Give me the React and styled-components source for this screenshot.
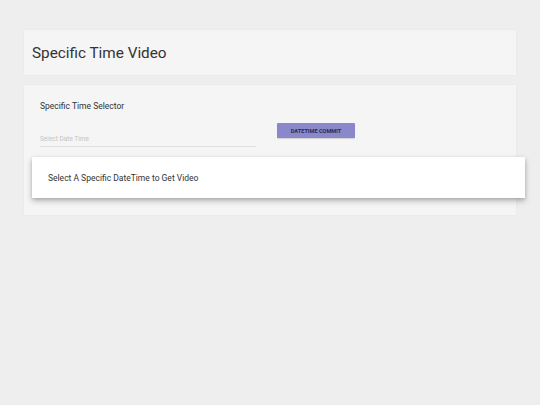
import React from "react";
import styled, { createGlobalStyle } from "styled-components";

const Global = createGlobalStyle`
  html, body { margin: 0; padding: 0; background: #eeeeee; }
  body { font-family: Roboto, "Noto Sans", sans-serif; }
  * { box-sizing: border-box; }
`;

const Page = styled.div`
  width: 540px;
  height: 405px;
  padding: 30px 24px 0 24px;
  display: flex;
  flex-direction: column;
  gap: 10px;
`;

const HeaderCard = styled.div`
  height: 45px;
  background: #f5f5f5;
  box-shadow: 0 0 1px rgba(0,0,0,0.08);
  display: flex;
  align-items: center;
  padding: 1px 8px 0 8px;
`;

const Title = styled.h1`
  margin: 0;
  font-size: 15.3px;
  font-weight: 400;
  color: #333;
  letter-spacing: 0;
`;

const MainCard = styled.div`
  background: #f5f5f5;
  box-shadow: 0 0 1px rgba(0,0,0,0.08);
  padding: 15px 0 17px 0;
  display: flex;
  flex-direction: column;
`;

const SectionTitle = styled.div`
  padding: 0 16px;
  font-size: 8.5px;
  color: #333;
  line-height: 12px;
`;

const FormRow = styled.div`
  display: flex;
  align-items: flex-start;
  padding: 0 16px;
  margin-top: 11px;
  gap: 21px;
`;

const Field = styled.div`
  width: 216px;
  margin-top: 8px;
  height: 16px;
  border-bottom: 1px solid #e0e0e0;
  display: flex;
  align-items: flex-end;
  padding-bottom: 3px;
`;

const Placeholder = styled.span`
  font-size: 6.5px;
  color: #c4c4c4;
`;

const Button = styled.button`
  width: 78px;
  height: 15px;
  border: none;
  border-radius: 1px;
  background: #8a87cb;
  color: #2a2a4a;
  font-family: Roboto, sans-serif;
  font-size: 5.6px;
  font-weight: 700;
  padding: 0;
  box-shadow: 0 1px 1px rgba(0,0,0,0.15);
`;

const ResultCard = styled.div`
  margin: 10px -9px 0 8px;
  height: 41px;
  background: #ffffff;
  box-shadow: 0 3px 6px rgba(0,0,0,0.25), 0 1px 3px rgba(0,0,0,0.12);
  display: flex;
  align-items: center;
  padding: 0 16px;
  font-size: 8.5px;
  color: #333;
`;

export default function App() {
  return (
    <>
      <Global />
      <Page>
        <HeaderCard>
          <Title>Specific Time Video</Title>
        </HeaderCard>
        <MainCard>
          <SectionTitle>Specific Time Selector</SectionTitle>
          <FormRow>
            <Field>
              <Placeholder>Select Date Time</Placeholder>
            </Field>
            <Button>DATETIME COMMIT</Button>
          </FormRow>
          <ResultCard>Select A Specific DateTime to Get Video</ResultCard>
        </MainCard>
      </Page>
    </>
  );
}
